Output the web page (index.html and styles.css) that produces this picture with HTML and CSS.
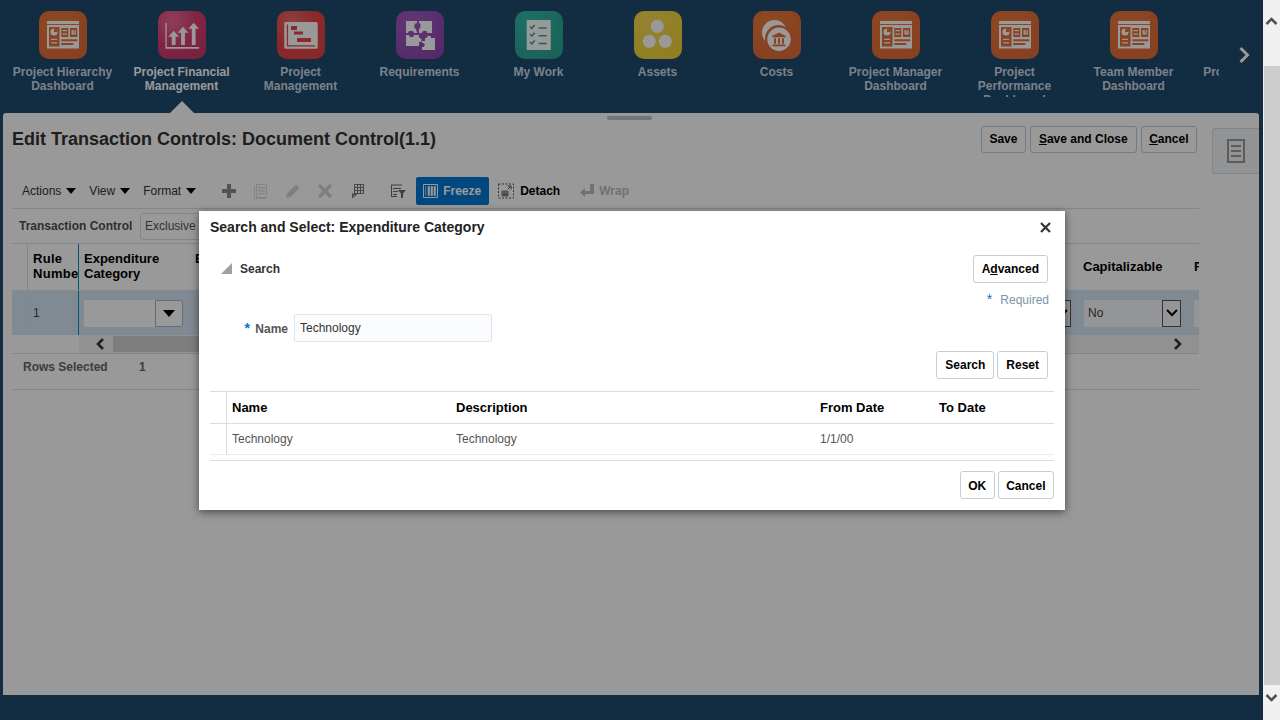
FILE: index.html
```html
<!DOCTYPE html>
<html lang="en">
<head>
  <meta charset="UTF-8">
  <title>Edit Transaction Controls</title>
  <link rel="stylesheet" href="styles.css">
</head>
<body>
  <svg class="defs" width="0" height="0">
    <defs>
      <radialGradient id="g-orange" cx="35%" cy="25%" r="80%"><stop offset="0" stop-color="#ec7a3c"/><stop offset="1" stop-color="#e26c36"/></radialGradient>
      <radialGradient id="g-pink" cx="30%" cy="20%" r="85%"><stop offset="0" stop-color="#ec6a97"/><stop offset="0.6" stop-color="#d93c72"/><stop offset="1" stop-color="#c93a6c"/></radialGradient>
      <radialGradient id="g-red" cx="30%" cy="20%" r="85%"><stop offset="0" stop-color="#e9686c"/><stop offset="0.6" stop-color="#ea4146"/><stop offset="1" stop-color="#e24449"/></radialGradient>
      <radialGradient id="g-purple" cx="30%" cy="20%" r="85%"><stop offset="0" stop-color="#a45bc4"/><stop offset="1" stop-color="#8f47ae"/></radialGradient>
      <radialGradient id="g-teal" cx="30%" cy="20%" r="85%"><stop offset="0" stop-color="#32bba8"/><stop offset="1" stop-color="#2ca595"/></radialGradient>
      <radialGradient id="g-yellow" cx="30%" cy="20%" r="85%"><stop offset="0" stop-color="#f6da52"/><stop offset="1" stop-color="#f2d339"/></radialGradient>
      <symbol id="ic-dashboard" viewBox="0 0 48 48">
        <rect x="8" y="10" width="32" height="3" fill="#fff"/>
        <rect x="8" y="14" width="32" height="23.5" fill="#fff"/>
        <rect x="10" y="16" width="10.5" height="19.5" fill="#e4703a"/>
        <circle cx="15" cy="21" r="3.6" fill="#fff"/>
        <path d="M15 21V17.4A3.6 3.6 0 0 1 18.6 21Z" fill="#e4703a"/>
        <rect x="12" y="27.8" width="6" height="1.2" fill="#fff"/>
        <rect x="12" y="31.2" width="6" height="1.2" fill="#fff"/>
        <rect x="22.3" y="17" width="7" height="9" fill="#e4703a"/>
        <rect x="23.5" y="19" width="4.6" height="1.2" fill="#fff"/>
        <rect x="23.5" y="22.5" width="4.6" height="1.2" fill="#fff"/>
        <rect x="31" y="17" width="7.3" height="9" fill="#e4703a"/>
        <path d="M32.5 19v4.6h4.3V19h-1.2v3.2h-.9V19h-1v3.2h-.1V19Z" fill="#fff"/>
        <rect x="22.3" y="28.3" width="16" height="2" fill="#e4703a"/>
        <rect x="22.3" y="32" width="12" height="2" fill="#e4703a"/>
      </symbol>
    </defs>
  </svg>

  <div class="app">
    <nav class="springboard">
      <div class="strip">
        <a class="tile">
          <svg class="tile-ic" viewBox="0 0 48 48"><rect width="48" height="48" rx="10" fill="url(#g-orange)"/><use href="#ic-dashboard"/></svg>
          <span class="tile-label">Project Hierarchy Dashboard</span>
        </a>
        <a class="tile tile-on">
          <svg class="tile-ic" viewBox="0 0 48 48">
            <rect width="48" height="48" rx="10" fill="url(#g-pink)"/>
            <path d="M7.4 12h1.3v24h32.4v1.7H7.4Z" fill="#fff"/>
            <path d="M15.7 19.7l5.3 6h-3.4V34h-3.8v-8.3h-3.4Z" fill="#fff"/>
            <path d="M25 15.7l5.3 6h-3.4V34h-3.8V21.7h-3.4Z" fill="#fff"/>
            <path d="M35.7 11.7l5.3 6h-3.4V34h-3.8V17.7h-3.4Z" fill="#fff"/>
          </svg>
          <span class="tile-label">Project Financial Management</span>
          <span class="tile-notch"></span>
        </a>
        <a class="tile">
          <svg class="tile-ic" viewBox="0 0 48 48">
            <rect width="48" height="48" rx="10" fill="url(#g-red)"/>
            <rect x="7.3" y="11" width="33.4" height="26.7" rx="1.5" fill="#fff"/>
            <path d="M9.8 13.5h1.3v20.7h27v1.3H9.800Z" fill="#e8454a"/>
            <rect x="14" y="15" width="6" height="4" fill="#e8454a"/>
            <rect x="17" y="20.500" width="9" height="3" fill="#e8454a"/>
            <rect x="20" y="27" width="14" height="4" fill="#e8454a"/>
          </svg>
          <span class="tile-label">Project Management</span>
        </a>
        <a class="tile">
          <svg class="tile-ic" viewBox="0 0 48 48">
            <rect width="48" height="48" rx="10" fill="url(#g-purple)"/>
            <path d="M10 10h11v2c-3 0-4 5-1 6l1 4h-3c0-3-6-3-6 0h-2Z" fill="#fff"/>
            <path d="M23 10h13v12h-5c1-3-5-3-5 0h-3v-4c2-1 2-6 0-6Z" fill="#fff"/>
            <path d="M10 24h3c0 3 5 3 5 0h5v3c3-1 4 5 0 4v4H10Z" fill="#fff"/>
            <path d="M29 27h2c-1-3 5-3 4 0h4v12H26v-3c3 1 4-5 0-4v-2h3Z" fill="#fff"/>
          </svg>
          <span class="tile-label">Requirements</span>
        </a>
        <a class="tile">
          <svg class="tile-ic" viewBox="0 0 48 48">
            <rect width="48" height="48" rx="10" fill="url(#g-teal)"/>
            <rect x="11.700" y="9" width="24" height="30" fill="#fff"/>
            <g fill="none" stroke="#2ca595" stroke-width="1.500">
              <path d="M15 15.500l1.800 1.800 3-3.300M15 23.200l1.800 1.800 3-3.300M15 31l1.800 1.800 3-3.300"/>
              <path d="M23.700 17h8M23.700 24.700h8M23.700 32.400h8"/>
            </g>
          </svg>
          <span class="tile-label">My Work</span>
        </a>
        <a class="tile">
          <svg class="tile-ic" viewBox="0 0 48 48">
            <rect width="48" height="48" rx="10" fill="url(#g-yellow)"/>
            <circle cx="23.300" cy="15.300" r="6.500" fill="#fff"/>
            <circle cx="15.300" cy="30.300" r="6.500" fill="#fff"/>
            <circle cx="31.300" cy="30.300" r="6.500" fill="#fff"/>
          </svg>
          <span class="tile-label">Assets</span>
        </a>
        <a class="tile">
          <svg class="tile-ic" viewBox="0 0 48 48">
            <rect width="48" height="48" rx="10" fill="url(#g-orange)"/>
            <circle cx="21.500" cy="21.500" r="12.500" fill="#fff"/>
            <circle cx="25.500" cy="27.500" r="13.500" fill="#e46f38"/>
            <circle cx="26" cy="28.300" r="11.700" fill="#fff"/>
            <path d="M26 21.500l6.800 3.600v1.200H19.200v-1.200Z" fill="#e46f38"/>
            <path d="M21 27.300h2v5.500h-2ZM25 27.300h2v5.500h-2ZM29 27.300h2v5.500h-2ZM19.500 33.500h13v1.800h-13Z" fill="#e46f38"/>
          </svg>
          <span class="tile-label">Costs</span>
        </a>
        <a class="tile">
          <svg class="tile-ic" viewBox="0 0 48 48"><rect width="48" height="48" rx="10" fill="url(#g-orange)"/><use href="#ic-dashboard"/></svg>
          <span class="tile-label">Project Manager Dashboard</span>
        </a>
        <a class="tile">
          <svg class="tile-ic" viewBox="0 0 48 48"><rect width="48" height="48" rx="10" fill="url(#g-orange)"/><use href="#ic-dashboard"/></svg>
          <span class="tile-label">Project Performance Dashboard</span>
        </a>
        <a class="tile">
          <svg class="tile-ic" viewBox="0 0 48 48"><rect width="48" height="48" rx="10" fill="url(#g-orange)"/><use href="#ic-dashboard"/></svg>
          <span class="tile-label">Team Member Dashboard</span>
        </a>
        <a class="tile">
          <span class="tile-ic"></span>
          <span class="tile-label">Project Resource Pool</span>
        </a>
      </div>
      <svg class="strip-next" width="12" height="18" viewBox="0 0 12 18"><path d="M2.500 2l7 7-7 7" fill="none" stroke="#fff" stroke-width="3"/></svg>
    </nav>

    <main class="panel">
      <span class="panel-handle"></span>
      <div class="panel-main">
        <div class="page-head">
          <h1 class="page-title">Edit Transaction Controls: Document Control(1.1)</h1>
          <div class="btn-row">
            <button class="btn btn-tight">Save</button>
            <button class="btn"><u>S</u>ave and Close</button>
            <button class="btn btn-tight"><u>C</u>ancel</button>
          </div>
        </div>

        <div class="toolbar">
          <span class="menu">Actions <i class="caret"></i></span>
          <span class="menu">View <i class="caret"></i></span>
          <span class="menu">Format <i class="caret"></i></span>
          <svg class="tool tool-first" viewBox="0 0 16 16"><path d="M6 1h4v5h5v4h-5v5H6v-5H1V6h5Z" fill="#8a8a8a"/></svg>
          <svg class="tool" viewBox="0 0 16 16"><path d="M3.500 1.500h10v13h-10Z" fill="none" stroke="#ddd"/><path d="M1.500 3v12.500H12" fill="none" stroke="#ddd"/><path d="M5 4h7v1.500H5ZM5 7h7v1.500H5ZM5 10h7v1.500H5Z" fill="#ddd"/></svg>
          <svg class="tool" viewBox="0 0 16 16"><path d="M1 15l1-4.500L11 1.500l3.500 3.500-9 9Z" fill="#d4d4d4"/></svg>
          <svg class="tool" viewBox="0 0 16 16"><path d="M2 2l12 12M14 2L2 14" stroke="#d4d4d4" stroke-width="3.500" fill="none"/></svg>
          <svg class="tool" viewBox="0 0 16 16"><path d="M5.500 1.500h9v9h-9ZM5.500 4.500h9M5.500 7.500h9M8.500 1.500v9M11.500 1.500v9" fill="none" stroke="#777" stroke-width="1"/><path d="M3 15v-4.500h2.500V9L8 11.500 5.500 14v-1.800H4.500V15Z" fill="#777"/></svg>
          <svg class="tool tool-filter" viewBox="0 0 16 16"><path d="M1 1.500h11v1H1ZM1 1.500h1V13H1ZM3 5h8v1H3ZM3 8h5v1H3ZM3 11h4v1H3ZM1 13h6v1H1Z" fill="#6a6a6a"/><path d="M8 7h8l-3 3.500V15h-2v-4.500Z" fill="#6a6a6a"/></svg>
          <span class="freeze">
            <svg width="15" height="14" viewBox="0 0 15 14"><path d="M.5.500h14v13H.500Z" fill="none" stroke="#fff"/><path d="M2.500 2.500v9M5 2.500h1.500v9H5ZM8 2.500h1.500v9H8ZM11 2.500h1.500v9H11Z" fill="#fff" stroke="#fff" stroke-width=".6"/></svg>
            Freeze
          </span>
          <svg class="tool tool-detach" viewBox="0 0 16 16"><path d="M.5 1h15v14H.500Z" fill="none" stroke="#555" stroke-dasharray="2 1.500"/><path d="M4 8h6v5H4ZM4 10h6M4 11.500h6M6 8v5M8 8v5" fill="none" stroke="#555" stroke-width=".8"/><path d="M9.500 3h3.500v3.500M13 3L10 6" fill="none" stroke="#555"/></svg>
          <span class="tool-text">Detach</span>
          <svg class="tool tool-wrap" viewBox="0 0 16 16"><path d="M11 1h4v10H6v3L1 9.500 6 5v3h5Z" fill="#bdbdbd"/></svg>
          <span class="tool-text tool-text-off">Wrap</span>
        </div>

        <div class="control-row">
          <span class="control-label">Transaction Control</span>
          <span class="control-input">Exclusive</span>
        </div>

        <div class="grid">
          <div class="grid-row grid-head">
            <div class="col col-sel"></div>
            <div class="col col-num">Rule Number</div>
            <div class="col col-cat">Expenditure Category</div>
            <div class="col col-type">Expenditure Type</div>
            <div class="col col-mid"></div>
            <div class="col col-cap">Capitalizable</div>
            <div class="col col-last">Reason</div>
          </div>
          <div class="grid-row grid-data">
            <div class="col col-sel"></div>
            <div class="col col-num">1</div>
            <div class="col col-cat">
              <span class="pick"><span class="pick-val"></span><span class="pick-btn"><i class="caret caret-dark"></i></span></span>
            </div>
            <div class="col col-type"></div>
            <div class="col col-mid">
              <span class="choice-btn choice-stub"><svg width="12" height="8" viewBox="0 0 12 8"><path d="M1 1l5 5 5-5" fill="none" stroke="#000" stroke-width="2"/></svg></span>
            </div>
            <div class="col col-cap">
              <span class="choice"><span class="choice-val">No</span><span class="choice-btn"><svg width="12" height="8" viewBox="0 0 12 8"><path d="M1 1l5 5 5-5" fill="none" stroke="#000" stroke-width="2"/></svg></span></span>
            </div>
            <div class="col col-last"><span class="choice-val choice-cut"></span></div>
          </div>
          <div class="grid-scroll">
            <div class="scroll-spacer"></div>
            <div class="scroll-track">
              <svg class="scroll-arrow" width="12" height="12" viewBox="0 0 12 12"><path d="M9 1L4 6l5 5" fill="none" stroke="#333" stroke-width="2.500"/></svg>
              <span class="scroll-thumb"></span>
              <svg class="scroll-arrow" width="12" height="12" viewBox="0 0 12 12"><path d="M3 1l5 5-5 5" fill="none" stroke="#333" stroke-width="2.500"/></svg>
            </div>
          </div>
          <div class="grid-foot">
            <span class="foot-label">Rows Selected</span>
            <span class="foot-val">1</span>
          </div>
        </div>
      </div>
      <div class="panel-rail">
        <span class="rail-tab">
          <svg width="18" height="24" viewBox="0 0 18 24"><path d="M1 1h16v22H1Z" fill="none" stroke="#999" stroke-width="2"/><path d="M4 7h10M4 12h10M4 17h10" stroke="#999" stroke-width="2"/></svg>
        </span>
      </div>
    </main>

    <div class="glass"></div>
  </div>

  <div class="scrollbar">
    <svg class="sb-arrow sb-up" width="17" height="17" viewBox="0 0 17 17"><path d="M3.500 11l5-5 5 5" fill="none" stroke="#505050" stroke-width="2.500"/></svg>
    <span class="scrollbar-thumb"></span>
    <svg class="sb-arrow sb-down" width="17" height="17" viewBox="0 0 17 17"><path d="M3.500 6l5 5 5-5" fill="none" stroke="#505050" stroke-width="2.500"/></svg>
  </div>

  <section class="dialog">
    <div class="dlg-title">
      <h2>Search and Select: Expenditure Category</h2>
      <svg width="11" height="11" viewBox="0 0 11 11"><path d="M1 1l9 9M10 1l-9 9" stroke="#333" stroke-width="2.200"/></svg>
    </div>
    <div class="dlg-search-head">
      <span class="disclose"><i class="disclose-tri"></i>Search</span>
      <button class="btn btn-light">A<u>d</u>vanced</button>
    </div>
    <div class="required"><span class="star">*</span>Required</div>
    <div class="name-row">
      <label class="name-label"><span class="star">*</span> Name</label>
      <span class="name-input">Technology</span>
    </div>
    <div class="dlg-actions">
      <button class="btn btn-light">Search</button>
      <button class="btn btn-light">Reset</button>
    </div>
    <div class="results">
      <div class="res-row res-head">
        <div class="res-sel"></div>
        <div>Name</div>
        <div>Description</div>
        <div>From Date</div>
        <div>To Date</div>
      </div>
      <div class="res-row res-data">
        <div class="res-sel"></div>
        <div>Technology</div>
        <div>Technology</div>
        <div>1/1/00</div>
        <div></div>
      </div>
    </div>
    <div class="dlg-foot">
      <button class="btn btn-light btn-tight">OK</button>
      <button class="btn btn-light btn-tight">Cancel</button>
    </div>
  </section>
</body>
</html>
```

FILE: styles.css
```css
* {
  box-sizing: border-box;
}
html, body {
  margin: 0;
  height: 720px;
  overflow: hidden;
}
body {
  display: flex;
  font-family: "Liberation Sans", Arial, sans-serif;
  font-size: 12px;
  color: #333;
  background: #1e4a6e;
}
.defs {
  position: absolute;
}

/* app + dim layer */
.app {
  position: relative;
  flex: 1;
  min-width: 0;
  display: flex;
  flex-direction: column;
  height: 720px;
  background: #1e4a6e;
}
.glass {
  position: absolute;
  inset: 0;
  background: rgba(0, 0, 0, 0.4);
}

/* springboard */
.springboard {
  position: relative;
  display: flex;
  height: 113px;
  padding-left: 3px;
}
.strip {
  display: flex;
  width: 1216px;
  overflow: hidden;
}
.tile {
  flex: 0 0 119px;
  display: flex;
  flex-direction: column;
  align-items: center;
  padding-top: 11px;
}
.tile-ic {
  flex: none;
  width: 48px;
  height: 48px;
}
.tile-label {
  display: block;
  height: 32px;
  margin-top: 6px;
  overflow: hidden;
  width: 111px;
  font-weight: bold;
  line-height: 14px;
  text-align: center;
  color: #ccd9e5;
}
.tile-on .tile-label {
  color: #fff;
}
.tile-notch {
  position: absolute;
  top: 101px;
  width: 0;
  height: 0;
  border-left: 12px solid transparent;
  border-right: 12px solid transparent;
  border-bottom: 12px solid #fff;
}
.strip-next {
  position: absolute;
  left: 1238px;
  top: 46px;
}

/* main panel */
.panel {
  position: relative;
  display: flex;
  width: 1256px;
  height: 582px;
  margin-left: 3px;
  background: #fff;
  border-radius: 3px 3px 0 0;
}
.panel-handle {
  position: absolute;
  left: 604px;
  top: 3px;
  width: 45px;
  height: 4px;
  border-radius: 2px;
  background: #b8c4ce;
}
.panel-main {
  flex: none;
  width: 1196px;
  padding-left: 9px;
}
.panel-rail {
  flex: 1;
  padding-top: 15px;
  display: flex;
  justify-content: flex-end;
}
.rail-tab {
  width: 47px;
  height: 46px;
  display: flex;
  align-items: center;
  justify-content: center;
  background: #f4f6f8;
  border: 1px solid #d6dfe6;
  border-right: none;
  border-radius: 3px 0 0 3px;
}
.page-head {
  display: flex;
  justify-content: space-between;
  align-items: center;
  height: 27px;
  margin-top: 13px;
  padding-right: 2px;
}
.page-title {
  margin: 0;
  font-size: 18px;
  font-weight: bold;
  color: #333;
}
.btn-row {
  display: flex;
  gap: 4px;
}
.btn {
  height: 27px;
  padding: 0 8px;
  font-family: inherit;
  font-size: 12px;
  font-weight: bold;
  color: #000;
  background: #fff;
  border: 1px solid #c4ced7;
  border-radius: 3px;
}
.btn-row .btn {
  padding-bottom: 2px;
}
.btn-light {
  height: 28px;
}
.btn.btn-tight {
  padding-left: 7.5px;
  padding-right: 7.5px;
}

/* toolbar */
.toolbar {
  display: flex;
  align-items: center;
  height: 32px;
  margin-top: 24px;
  padding: 0 0 4px 10px;
  border-bottom: 1px solid #d6dfe6;
}
.menu {
  display: flex;
  align-items: center;
  margin-right: 13px;
  gap: 5px;
  color: #333;
}
.caret {
  display: inline-block;
  width: 0;
  height: 0;
  border-left: 5px solid transparent;
  border-right: 5px solid transparent;
  border-top: 6px solid #000;
}
.tool {
  flex: none;
  width: 16px;
  height: 16px;
  margin-left: 16px;
}
.tool-first {
  margin-left: 12px;
}
.tool-filter {
  margin-left: 25px;
}
.freeze {
  display: flex;
  align-items: center;
  gap: 5px;
  width: 73px;
  height: 28px;
  margin-left: 10px;
  padding-left: 7px;
  font-weight: bold;
  color: #fff;
  background: #0078d4;
  border-radius: 2px;
}
.tool-detach {
  margin-left: 9px;
}
.tool-text {
  margin-left: 6px;
  font-weight: bold;
  color: #000;
}
.tool-text-off {
  margin-left: 4px;
  color: #bdbdbd;
}
.tool-wrap {
  margin-left: 19px;
}

/* transaction control */
.control-row {
  display: flex;
  align-items: center;
  height: 35px;
  padding-left: 7px;
  border-bottom: 1px solid #d6dfe6;
}
.control-label {
  width: 121px;
  font-weight: bold;
  color: #4f4f4f;
}
.control-input {
  width: 200px;
  height: 27px;
  line-height: 25px;
  padding-left: 4px;
  color: #555;
  border: 1px solid #d6dfe6;
  border-radius: 3px;
}

/* grid */
.grid-row {
  display: flex;
  overflow: hidden;
}
.col {
  flex: none;
  overflow: hidden;
}
.col-sel {
  width: 16px;
  border-right: 1px solid #d6dfe6;
}
.col-num {
  width: 51px;
  padding-left: 5px;
  border-right: 1px solid #0b8fb3;
}
.col-cat {
  width: 111px;
  padding-left: 5px;
}
.col-type {
  width: 120px;
  padding-left: 5px;
}
.col-mid {
  width: 767px;
}
.col-cap {
  width: 112px;
  padding-left: 7px;
}
.col-last {
  width: 10px;
  padding-left: 5px;
}
.grid-head {
  height: 46px;
  font-size: 13px;
  font-weight: bold;
  line-height: 15px;
  color: #000;
}
.grid-head .col {
  padding-top: 7px;
}
.grid-head .col-num {
  letter-spacing: 0.3px;
}
.grid-head .col-cap {
  padding-left: 6px;
}
.grid-head .col-cap,
.grid-head .col-last {
  padding-top: 15px;
}
.grid-data {
  height: 45px;
  padding-top: 1px;
  background: #d6e6f5;
}
.grid-data .col {
  display: flex;
  align-items: center;
  color: #444;
}
.pick {
  display: flex;
  width: 99px;
  height: 27px;
}
.pick-val {
  flex: 1;
  background: #fff;
  border-radius: 3px 0 0 3px;
}
.pick-btn {
  width: 28px;
  display: flex;
  align-items: center;
  justify-content: center;
  background: #fff;
  border: 1px solid #aab4bd;
  border-radius: 0 3px 3px 0;
}
.caret-dark {
  border-left-width: 6px;
  border-right-width: 6px;
  border-top-width: 7px;
}
.choice {
  display: flex;
  width: 97px;
  height: 27px;
}
.choice-val {
  flex: 1;
  line-height: 27px;
  padding-left: 4px;
  background: #f7f9fb;
}
.choice-cut {
  flex: none;
  width: 10px;
  height: 27px;
}
.choice-btn {
  width: 19px;
  display: flex;
  align-items: center;
  justify-content: center;
  background: #f7f9fb;
  border: 1px solid #555;
}
.choice-stub {
  margin-left: auto;
  margin-right: 6px;
  height: 27px;
}
.grid-scroll {
  display: flex;
  height: 19px;
  border-bottom: 1px solid #d6dfe6;
}
.scroll-spacer {
  width: 67px;
}
.scroll-track {
  flex: 1;
  display: flex;
  align-items: center;
  padding: 0 15px;
  background: #f2f2f2;
}
.scroll-thumb {
  flex: none;
  width: 800px;
  height: 16px;
  margin: 0 auto 0 7px;
  background: #d2d2d2;
}
.scroll-arrow {
  flex: none;
}
.grid-foot {
  display: flex;
  align-items: center;
  height: 36px;
  padding: 0 0 9px 11px;
  border-bottom: 1px solid #d6dfe6;
}
.foot-label {
  width: 116px;
  font-weight: bold;
  color: #666;
}
.foot-val {
  font-weight: bold;
  color: #666;
}

/* browser scrollbar */
.scrollbar {
  flex: 0 0 17px;
  display: flex;
  flex-direction: column;
  height: 720px;
  background: #f0f0f0;
}
.sb-arrow {
  flex: none;
}
.sb-up {
  margin: 13px 0 36px;
}
.sb-down {
  margin: 4px 0 14px;
}
.scrollbar-thumb {
  flex: 1;
  margin-left: 1px;
  background: #cdcdcd;
}

/* dialog */
.dialog {
  position: absolute;
  left: 199px;
  top: 211px;
  width: 866px;
  height: 299px;
  background: #fff;
  border-left: 1px solid #fff;
  box-shadow: 0 2px 8px rgba(0, 0, 0, 0.55);
}
.dlg-title {
  display: flex;
  justify-content: space-between;
  align-items: center;
  height: 32px;
  padding: 0 14px 0 10px;
}
.dlg-title h2 {
  margin: 0;
  font-size: 14px;
  font-weight: bold;
  color: #222;
}
.dlg-search-head {
  display: flex;
  justify-content: space-between;
  align-items: center;
  height: 28px;
  margin-top: 12px;
  padding: 0 17px 0 21px;
}
.disclose {
  display: flex;
  align-items: center;
  gap: 8px;
  font-weight: bold;
  color: #333;
}
.disclose-tri {
  width: 0;
  height: 0;
  margin-bottom: 2px;
  border-left: 11px solid transparent;
  border-bottom: 11px solid #a0a0a0;
}
.required {
  height: 31px;
  padding: 8px 16px 0 0;
  text-align: right;
  color: #7a94ab;
}
.star {
  color: #0572ce;
  font-size: 14px;
  margin-right: 8px;
}
.name-row {
  display: flex;
  align-items: center;
  gap: 6px;
  height: 28px;
}
.name-label {
  width: 88px;
  text-align: right;
  font-weight: bold;
  color: #555;
}
.name-label .star {
  margin-right: 2px;
}
.name-input {
  width: 198px;
  height: 28px;
  line-height: 26px;
  padding-left: 5px;
  color: #333;
  background: #fbfcfd;
  border: 1px solid #dfe5ea;
  border-radius: 2px;
}
.dlg-actions {
  display: flex;
  justify-content: flex-end;
  gap: 3px;
  margin-top: 9px;
  padding-right: 17px;
}
.results {
  margin: 12px 11px 0 10px;
  height: 70px;
  border-top: 1px solid #d6dfe6;
  border-bottom: 1px solid #d6dfe6;
}
.res-row {
  display: grid;
  grid-template-columns: 17px 224px 364px 119px 120px;
  align-items: center;
}
.res-row > div {
  padding-left: 5px;
}
.res-row > .res-sel {
  align-self: stretch;
  border-right: 1px solid #d6dfe6;
}
.res-head {
  height: 32px;
  font-size: 13px;
  font-weight: bold;
  color: #000;
  border-bottom: 1px solid #d6dfe6;
}
.res-data {
  height: 31px;
  color: #555;
  border-bottom: 1px solid #e8ecf0;
}
.dlg-foot {
  display: flex;
  justify-content: flex-end;
  gap: 3px;
  margin-top: 10px;
  padding-right: 11px;
}
.dlg-foot .btn {
  padding-top: 2px;
}
```
